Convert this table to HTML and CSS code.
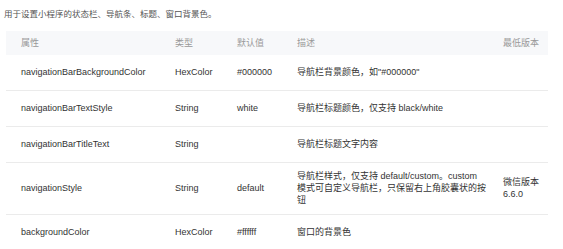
FILE: index.html
```html
<!DOCTYPE html>
<html lang="zh-CN">
<head>
    <meta charset="UTF-8">
    <title>window 配置</title>
    <link rel="stylesheet" href="styles.css">
</head>
<body>
<div class="doc">
    <p class="intro">用于设置小程序的状态栏、导航条、标题、窗口背景色。</p>
    <table class="props">
        <colgroup>
            <col class="c-name">
            <col class="c-type">
            <col class="c-default">
            <col class="c-desc">
            <col class="c-ver">
        </colgroup>
        <thead>
            <tr>
                <th>属性</th>
                <th>类型</th>
                <th>默认值</th>
                <th>描述</th>
                <th>最低版本</th>
            </tr>
        </thead>
        <tbody>
            <tr>
                <td>navigationBarBackgroundColor</td>
                <td>HexColor</td>
                <td>#000000</td>
                <td>导航栏背景颜色，如"#000000"</td>
                <td></td>
            </tr>
            <tr>
                <td>navigationBarTextStyle</td>
                <td>String</td>
                <td>white</td>
                <td>导航栏标题颜色，仅支持 black/white</td>
                <td></td>
            </tr>
            <tr>
                <td>navigationBarTitleText</td>
                <td>String</td>
                <td></td>
                <td>导航栏标题文字内容</td>
                <td></td>
            </tr>
            <tr>
                <td>navigationStyle</td>
                <td>String</td>
                <td>default</td>
                <td class="wrap">导航栏样式，仅支持 default/custom。custom 模式可自定义导航栏，只保留右上角胶囊状的按钮</td>
                <td>微信版本<br>6.6.0</td>
            </tr>
            <tr>
                <td>backgroundColor</td>
                <td>HexColor</td>
                <td>#ffffff</td>
                <td>窗口的背景色</td>
                <td></td>
            </tr>
        </tbody>
    </table>
</div>
</body>
</html>
```

FILE: styles.css
```css
body {
    margin: 0;
    background: #fff;
    font-family: "Liberation Sans", "Noto Sans CJK SC", sans-serif;
    color: #333;
}
.doc { padding: 8px 0 0 4px; }
.intro {
    margin: 0 0 11px;
    font-size: 8.5px;
    line-height: 12px;
    color: #555;
}
.props {
    margin-left: 2px;
    width: 542px;
    border-collapse: collapse;
    table-layout: fixed;
    font-size: 9px;
    line-height: 12px;
}
.c-name { width: 154px; }
.c-type { width: 62px; }
.c-default { width: 60px; }
.c-desc { width: 206px; }
.c-ver { width: 60px; }
.props th {
    background: #f7f8fa;
    color: #999;
    font-weight: normal;
    text-align: left;
    padding: 6px 6px 6px 15px;
}
.props td {
    height: 20px;
    padding: 7px 6px 8px 15px;
    border-bottom: 1px solid #ebebeb;
    vertical-align: middle;
}
.props td.wrap { padding-right: 0; }
```
